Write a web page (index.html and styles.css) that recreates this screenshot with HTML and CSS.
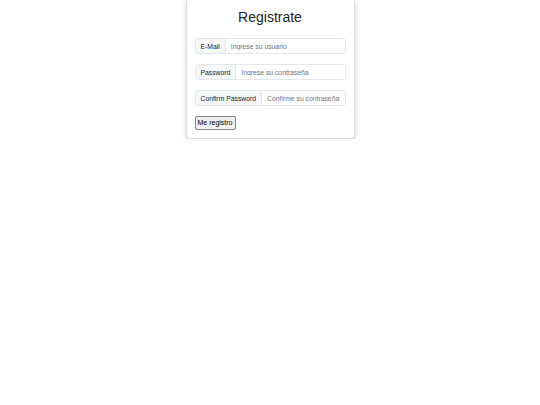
FILE: index.html
```html
<!DOCTYPE html>
<html lang="es">
<head>
<meta charset="utf-8">
<title>Registrate</title>
<link rel="stylesheet" href="styles.css">
</head>
<body>
<div class="card">
  <h2 class="title">Registrate</h2>
  <form class="form">
    <div class="group">
      <span class="addon">E-Mail</span>
      <input class="field" type="text" placeholder="Ingrese su usuario">
    </div>
    <div class="group">
      <span class="addon">Password</span>
      <input class="field" type="password" placeholder="Ingrese su contraseña">
    </div>
    <div class="group">
      <span class="addon">Confirm Password</span>
      <input class="field" type="password" placeholder="Confirme su contraseña">
    </div>
    <div class="actions">
      <button class="btn" type="button">Me registro</button>
    </div>
  </form>
</div>
</body>
</html>
```

FILE: styles.css
```css
html, body {
  margin: 0;
  padding: 0;
  background: #ffffff;
  font-family: "Liberation Sans", Arial, sans-serif;
  color: #212529;
}
.card {
  width: 169px;
  margin: 0 auto;
  box-sizing: border-box;
  border: 1px solid #dcdcdc;
  border-top: none;
  border-radius: 0 0 4px 4px;
  box-shadow: 0 1px 4px rgba(0,0,0,0.18);
  padding: 8px 8px 8px 8px;
  background: #fff;
}
.title {
  margin: 0 0 12px;
  font-weight: 400;
  font-size: 14px;
  line-height: 18px;
  text-align: center;
  color: #212529;
}
.form {
  display: flex;
  flex-direction: column;
  gap: 10px;
}
.group {
  display: flex;
  height: 16px;
  border: 1px solid #e3e6ea;
  border-radius: 3px;
  box-sizing: border-box;
  overflow: hidden;
}
.addon {
  display: flex;
  align-items: center;
  padding: 0 5px;
  background: #f6f7f8;
  border-right: 1px solid #e3e6ea;
  font-size: 6.8px;
  color: #212529;
  white-space: nowrap;
}
.field {
  flex: 1;
  min-width: 0;
  border: none;
  outline: none;
  padding: 0 5px;
  font-family: "Liberation Sans", Arial, sans-serif;
  font-size: 6.8px;
  color: #212529;
  background: #fff;
}
.field::placeholder {
  color: #6c757d;
}
.actions {
  margin-top: 0;
  display: flex;
}
.btn {
  font-family: "Liberation Sans", Arial, sans-serif;
  font-size: 7px;
  color: #000;
  background: #efefef;
  border: 1px solid #858585;
  border-radius: 2px;
  padding: 0 2px;
  height: 14px;
  line-height: 12px;
  white-space: nowrap;
}
```
